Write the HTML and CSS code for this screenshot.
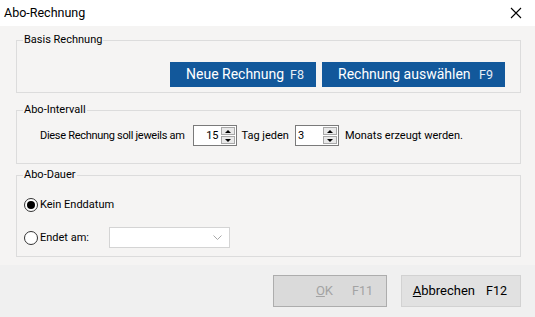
FILE: index.html
```html
<!DOCTYPE html>
<html lang="de">
<head>
<meta charset="utf-8">
<title>Abo-Rechnung</title>
<link rel="stylesheet" href="styles.css">
</head>
<body>
<div class="window">
  <div class="titlebar">
    <span class="title">Abo-Rechnung</span>
    <svg class="close" width="12" height="12" viewBox="0 0 12 12"><path d="M1 1L11 11M11 1L1 11" stroke="#000" stroke-width="1.1" fill="none"/></svg>
  </div>
  <div class="main">
    <section class="group g1">
      <div class="legend">Basis Rechnung</div>
      <div class="btnrow">
        <button class="primary w1"><span>Neue Rechnung</span><span class="key">F8</span></button>
        <button class="primary w2"><span>Rechnung auswählen</span><span class="key">F9</span></button>
      </div>
    </section>
    <section class="group g2">
      <div class="legend">Abo-Intervall</div>
      <div class="introw">
        <span class="t1">Diese Rechnung soll jeweils am</span>
        <div class="spin s1"><span class="val right">15</span><span class="arrows"><span class="arr up"></span><span class="arr down"></span></span></div>
        <span class="t2">Tag jeden</span>
        <div class="spin s2"><span class="val">3</span><span class="arrows"><span class="arr up"></span><span class="arr down"></span></span></div>
        <span class="t3">Monats erzeugt werden.</span>
      </div>
    </section>
    <section class="group g3">
      <div class="legend">Abo-Dauer</div>
      <div class="radiorow r1"><span class="radio checked"></span><span>Kein Enddatum</span></div>
      <div class="radiorow r2"><span class="radio"></span><span class="rlabel">Endet am:</span>
        <div class="combo"><svg width="9" height="5" viewBox="0 0 9 5"><path d="M0.5 0.5L4.5 4.5L8.5 0.5" stroke="#a8a8a8" fill="none"/></svg></div>
      </div>
    </section>
  </div>
  <div class="footer">
    <button class="fbtn ok" disabled><span><u>O</u>K</span><span class="fkey k1">F11</span></button>
    <button class="fbtn cancel"><span><u>A</u>bbrechen</span><span class="fkey k2">F12</span></button>
  </div>
</div>
</body>
</html>
```

FILE: styles.css
```css
* { box-sizing: border-box; }
html, body { margin: 0; padding: 0; }
body {
  width: 535px;
  height: 317px;
  overflow: hidden;
  font-family: Roboto, "Liberation Sans", sans-serif;
  font-size: 11px;
  color: #000;
  background: #f5f4f3;
  white-space: nowrap;
}
.window { display: flex; flex-direction: column; height: 317px; }
.titlebar {
  height: 26px;
  background: #fff;
  display: flex;
  align-items: center;
  justify-content: space-between;
  padding: 0 13px 1px 4px;
  font-size: 12.5px;
}
.close { display: block; }
.main { flex: 1; display: flex; flex-direction: column; padding: 0 14px 0 16px; }
.group {
  border: 1px solid #dcdcdc;
  display: flex;
  flex-direction: column;
}
.legend {
  margin: -9px 0 0 6px;
  padding: 0 1px;
  line-height: 16px;
  background: #f5f4f3;
  align-self: flex-start;
}
.g1 { margin-top: 14px; height: 53px; }
.g2 { margin-top: 17px; height: 54px; }
.g3 { margin-top: 11px; height: 82px; }

.btnrow { display: flex; justify-content: flex-end; gap: 6px; padding-right: 15px; margin-top: 14px; }
.primary {
  height: 25px;
  border: none;
  background: #12589b;
  color: #fff;
  font-family: inherit;
  font-size: 14px;
  display: flex;
  align-items: center;
  justify-content: space-between;
  padding: 0 12px 1px 16px;
  flex-shrink: 0;
}
.primary .key { color: #e6edf5; font-size: 12.5px; }
.w1 { width: 146px; }
.w2 { width: 183px; }

.introw { display: flex; align-items: center; height: 21px; margin-top: 7px; padding-left: 23px; }
.introw > * { flex-shrink: 0; }
.t1 { letter-spacing: -0.3px; }
.spin {
  width: 44px;
  height: 21px;
  border: 1px solid #7a7a7a;
  background: #fff;
  display: flex;
}
.s1 { margin-left: 8px; }
.s2 { margin-left: 6px; }
.t2 { margin-left: 5px; }
.t3 { margin-left: 6px; }
.val { flex: 1; line-height: 19px; padding-left: 2px; }
.val.right { text-align: right; padding: 0 2px 0 0; }
.arrows { width: 15px; display: flex; flex-direction: column; padding: 1px 1px 1px 0; gap: 1px; }
.arr {
  flex: 1;
  background: #e9e9e9;
  border: 1px solid #a8a8a8;
  display: flex;
  align-items: center;
  justify-content: center;
}
.arr::before { content: ""; width: 0; height: 0; border-left: 3px solid transparent; border-right: 3px solid transparent; }
.up::before { border-bottom: 3px solid #000; }
.down::before { border-top: 3px solid #000; }

.radiorow { display: flex; align-items: center; height: 21px; padding-left: 7px; }
.r1 { margin-top: 11px; }
.r2 { margin-top: 12px; }
.radio {
  width: 14px;
  height: 14px;
  border-radius: 50%;
  border: 1px solid #333;
  background: #fff;
  margin-right: 2px;
  display: flex;
  align-items: center;
  justify-content: center;
}
.radio.checked::before { content: ""; width: 8px; height: 8px; border-radius: 50%; background: #000; }
.rlabel { width: 69px; }
.combo {
  width: 121px;
  height: 21px;
  border: 1px solid #d4d4d4;
  background: #fff;
  display: flex;
  align-items: center;
  justify-content: flex-end;
  padding-right: 7px;
}
.combo svg { display: block; }

.footer {
  height: 52px;
  background: #f0f0f0;
  display: flex;
  justify-content: flex-end;
  align-items: flex-start;
  gap: 14px;
  padding: 10px 14px 0 0;
}
.fbtn {
  height: 32px;
  font-family: inherit;
  font-size: 13px;
  display: flex;
  align-items: center;
  justify-content: flex-end;
  padding: 0 13px 1px 0;
}
.ok { width: 114px; background: #dadada; border: 1px solid #adadad; color: #a3a3a3; }
.cancel { width: 120px; background: #e1e1e1; border: 1px solid #d2d2d2; color: #000; }
.fkey { font-size: 12.5px; }
.k1 { margin-left: 19px; }
.k2 { margin-left: 11px; }
```
